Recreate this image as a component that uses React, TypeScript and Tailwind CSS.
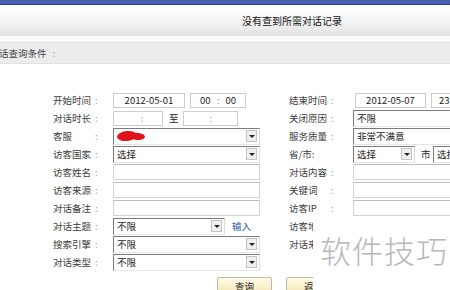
import React from 'react';

const FONT = { fontFamily: '"SimSun", "Noto Sans CJK SC", "Liberation Sans", sans-serif' };

function Label({ text, w }: { text: string; w: string }) {
  return (
    <div className={`${w} flex shrink-0 items-center text-[#3c3c3c]`}>
      <span className="w-[42px] whitespace-nowrap">{text}</span>
      <span className="text-[#9a9a9a]">:</span>
    </div>
  );
}

function Arrow() {
  return (
    <div className="mr-[2px] flex h-[12px] w-[11px] shrink-0 items-center justify-center border border-[#c4c4c4] bg-[#efefef]">
      <div className="h-0 w-0 border-x-[3px] border-t-[3px] border-x-transparent border-t-[#222]" />
    </div>
  );
}

function Select({ value, w, arrow = true, children }: { value?: string; w: string; arrow?: boolean; children?: React.ReactNode }) {
  return (
    <div
      className={`${w} flex h-[17px] shrink-0 items-center justify-between border border-t-[#7c7c7c] border-l-[#7c7c7c] border-r-[#dcdcdc] border-b-[#e6e6e6] bg-white pl-[3px] text-[#222]`}
    >
      <span className="whitespace-nowrap">{children ?? value}</span>
      {arrow && <Arrow />}
    </div>
  );
}

function Input({ w }: { w: string }) {
  return <div className={`${w} h-[16px] shrink-0 border border-[#d2d2d2] border-t-[#bdbdbd] bg-white`} />;
}

function Box({ w, children, cls = '' }: { w: string; children?: React.ReactNode; cls?: string }) {
  return (
    <div className={`${w} flex h-[15px] shrink-0 items-center border border-[#cdcdcd] bg-white text-[#222] ${cls}`}>
      {children}
    </div>
  );
}

function Row({ children }: { children: React.ReactNode }) {
  return <div className="flex h-[18px] items-center">{children}</div>;
}

export default function App() {
  return (
    <div className="relative h-[290px] w-[450px] overflow-hidden bg-white text-[9.5px]" style={FONT}>
      {/* title bar */}
      <div className="h-[5px] border-b border-[#2d4486] bg-[#4560ac]" />
      <div className="flex h-[31px] items-center bg-gradient-to-b from-[#fefefe] via-[#f5f5f5] to-[#e2e2e2] pl-[242px] text-[10px] text-[#111]">
        没有查到所需对话记录
      </div>
      <div className="h-[6px] bg-[#f9f9f9]" />
      <div className="flex h-[22px] items-center border-y border-[#e2e2e2] bg-[#ececec] text-[#444]">
        <span className="-ml-[1px]">话查询条件</span>
        <span className="ml-[6px] text-[#a0a0a0]">:</span>
      </div>
      <div className="h-[27px]" />

      {/* form */}
      <div className="flex pl-[53px]">
        <div className="flex w-[236px] shrink-0 flex-col">
          <Row>
            <Label text="开始时间" w="w-[60px]" />
            <Box w="w-[72px]" cls="justify-center">2012-05-01</Box>
            <Box w="w-[56px]" cls="ml-[5px] justify-around px-[6px]">
              <span>00</span>
              <span className="text-[#888]">:</span>
              <span>00</span>
            </Box>
          </Row>
          <Row>
            <Label text="对话时长" w="w-[60px]" />
            <Box w="w-[50px]" cls="justify-center text-[#999]">
              <span className="ml-[8px]">:</span>
            </Box>
            <span className="ml-[6px] w-[14px] text-[#222]">至</span>
            <Box w="w-[55px]" cls="justify-center text-[#999]">
              <span>:</span>
            </Box>
          </Row>
          <Row>
            <Label text="客服" w="w-[60px]" />
            <Select w="w-[147px]">
              <span className="flex items-center">
                <span className="block h-[10px] w-[20px] -rotate-6 rounded-[50%] bg-[#e0121a]" />
                <span className="-ml-[6px] block h-[7px] w-[14px] rotate-3 rounded-[50%] bg-[#e0121a]" />
              </span>
            </Select>
          </Row>
          <Row>
            <Label text="访客国家" w="w-[60px]" />
            <Select w="w-[147px]" value="选择" />
          </Row>
          <Row>
            <Label text="访客姓名" w="w-[60px]" />
            <Input w="w-[147px]" />
          </Row>
          <Row>
            <Label text="访客来源" w="w-[60px]" />
            <Input w="w-[147px]" />
          </Row>
          <Row>
            <Label text="对话备注" w="w-[60px]" />
            <Input w="w-[147px]" />
          </Row>
          <Row>
            <Label text="对话主题" w="w-[60px]" />
            <Select w="w-[112px]" value="不限" />
            <span className="ml-[7px] text-[#2f5fa8]">输入</span>
          </Row>
          <Row>
            <Label text="搜索引擎" w="w-[60px]" />
            <Select w="w-[147px]" value="不限" />
          </Row>
          <Row>
            <Label text="对话类型" w="w-[60px]" />
            <Select w="w-[147px]" value="不限" />
          </Row>
        </div>

        <div className="flex shrink-0 flex-col">
          <Row>
            <Label text="结束时间" w="w-[64px]" />
            <Box w="w-[71px]" cls="ml-[2px] justify-center">2012-05-07</Box>
            <Box w="w-[40px]" cls="ml-[5px] pl-[7px]">23</Box>
          </Row>
          <Row>
            <Label text="关闭原因" w="w-[64px]" />
            <Select w="w-[150px]" value="不限" arrow={false} />
          </Row>
          <Row>
            <Label text="服务质量" w="w-[64px]" />
            <Select w="w-[150px]" value="非常不满意" arrow={false} />
          </Row>
          <Row>
            <span className="w-[64px] shrink-0 text-[#3c3c3c]">省/市:</span>
            <Select w="w-[62px]" value="选择" />
            <span className="ml-[6px] w-[12px] text-[#222]">市</span>
            <Select w="w-[40px]" value="选择" arrow={false} />
          </Row>
          <Row>
            <Label text="对话内容" w="w-[64px]" />
            <Input w="w-[150px]" />
          </Row>
          <Row>
            <Label text="关键词" w="w-[64px]" />
            <Input w="w-[150px]" />
          </Row>
          <Row>
            <Label text="访客IP" w="w-[64px]" />
            <Input w="w-[150px]" />
          </Row>
          <Row>
            <div className="w-[24px] overflow-hidden whitespace-nowrap text-[#3c3c3c]">访客地区</div>
          </Row>
          <Row>
            <div className="w-[24px] overflow-hidden whitespace-nowrap text-[#3c3c3c]">对话来源</div>
          </Row>
        </div>
      </div>

      {/* buttons */}
      <div className="mt-[6px] flex pl-[217px]">
        <button className="h-[18px] w-[55px] rounded-[2px] border border-[#b9b9b9] bg-gradient-to-b from-[#fffbe6] to-[#f3e6b4] text-[9.5px] text-[#222]">
          查询
        </button>
        <div className="ml-[14px] h-[18px] w-[27px] overflow-hidden">
          <button className="h-[18px] w-[55px] rounded-[2px] border border-[#b9b9b9] bg-gradient-to-b from-[#fffbe6] to-[#f3e6b4] text-[9.5px] text-[#222]">
            返回
          </button>
        </div>
      </div>

      {/* watermark */}
      <div className="absolute left-[313px] top-[220px] flex h-[70px] w-[137px] items-start bg-white/95 pl-[7px] pt-[14px]">
        <span className="text-[31px] leading-none tracking-[1px] text-[#b8b8b8]" style={{ fontFamily: '"Noto Sans CJK SC", sans-serif', fontWeight: 300 }}>
          软件技巧
        </span>
      </div>
    </div>
  );
}
